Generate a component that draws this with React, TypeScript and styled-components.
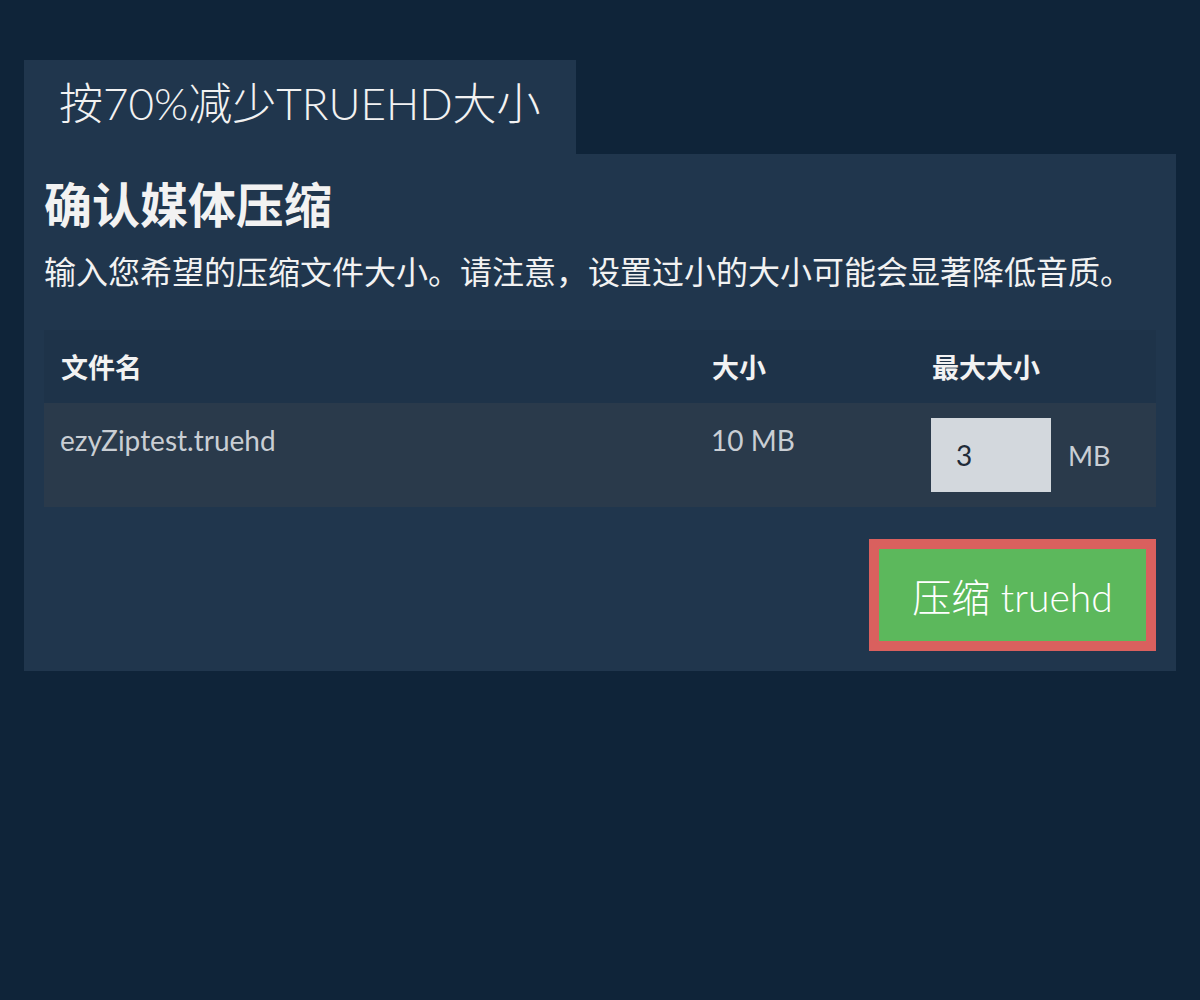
import styled, { createGlobalStyle } from 'styled-components';

const GlobalStyle = createGlobalStyle`
  body {
    margin: 0;
    background: #0f2439;
    font-family: Lato, "Noto Sans CJK SC", sans-serif;
    color: #eeeeee;
  }
`;

const Page = styled.div`
  padding: 60px 24px;
`;

const Tab = styled.div`
  display: inline-block;
  background: #20364d;
  padding: 0 35px;
  height: 94px;
  line-height: 86px;
  font-size: 44px;
  font-weight: 300;
  color: #f2f2f2;
`;

const Panel = styled.div`
  background: #20364d;
  padding: 18px 20px 20px;
  display: flex;
  flex-direction: column;
`;

const Title = styled.h1`
  margin: 0;
  font-size: 48px;
  font-weight: 700;
  line-height: 66px;
  color: #f2f2f2;
`;

const Note = styled.p`
  margin: 12px 0 36px;
  font-size: 32px;
  line-height: 44px;
  font-weight: 400;
  color: #f2f2f2;
`;

const Table = styled.div`
  display: grid;
  grid-template-columns: 651px 220px 1fr;
`;

const HeadCell = styled.div`
  background: #1e3349;
  height: 73px;
  padding: 0 17px;
  display: flex;
  align-items: center;
  font-size: 27px;
  font-weight: 700;
  color: #f2f2f2;
`;

const Cell = styled.div`
  background: #2a3a4b;
  height: 104px;
  padding: 20px 16px 0;
  box-sizing: border-box;
  font-size: 28px;
  color: #c9ced4;
`;

const MaxCell = styled(Cell)`
  padding: 15px 16px 15px;
  display: flex;
  align-items: center;
  gap: 17px;
`;

const SizeInput = styled.input`
  width: 120px;
  height: 74px;
  box-sizing: border-box;
  border: none;
  background: #d3d8dd;
  padding: 0 25px;
  font-family: Lato, sans-serif;
  font-size: 28px;
  color: #1f2b38;
  outline: none;
`;

const Unit = styled.span`
  font-size: 27px;
  color: #c9ced4;
`;

const Actions = styled.div`
  display: flex;
  justify-content: flex-end;
  margin-top: 32px;
`;

const Button = styled.button`
  width: 287px;
  height: 112px;
  box-sizing: border-box;
  border: 10px solid #d9605e;
  background: #5cb85c;
  color: #ffffff;
  font-family: Lato, "Noto Sans CJK SC", sans-serif;
  font-size: 39px;
  font-weight: 300;
  cursor: pointer;
`;

export default function App() {
  return (
    <Page>
      <GlobalStyle />
      <Tab>按70%减少TRUEHD大小</Tab>
      <Panel>
        <Title>确认媒体压缩</Title>
        <Note>输入您希望的压缩文件大小。请注意，设置过小的大小可能会显著降低音质。</Note>
        <Table>
          <HeadCell>文件名</HeadCell>
          <HeadCell>大小</HeadCell>
          <HeadCell>最大大小</HeadCell>
          <Cell>ezyZiptest.truehd</Cell>
          <Cell>10 MB</Cell>
          <MaxCell>
            <SizeInput type="text" defaultValue="3" />
            <Unit>MB</Unit>
          </MaxCell>
        </Table>
        <Actions>
          <Button>压缩 truehd</Button>
        </Actions>
      </Panel>
    </Page>
  );
}
